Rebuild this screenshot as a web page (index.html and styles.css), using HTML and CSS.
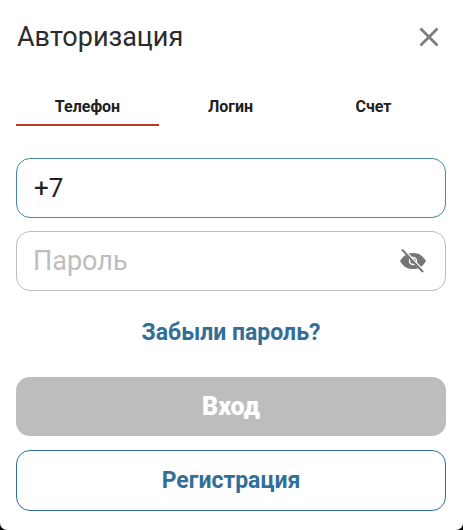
FILE: index.html
```html
<!DOCTYPE html>
<html lang="ru">
<head>
    <meta charset="UTF-8">
    <title>Авторизация</title>
    <link rel="stylesheet" href="styles.css">
</head>
<body>
    <div class="modal">
        <div class="modal-head">
            <div class="modal-title">Авторизация</div>
            <svg class="close" width="20" height="20" viewBox="0 0 20 20">
                <path d="M1.5 1.5 L18.5 18.5 M18.5 1.5 L1.5 18.5" stroke="#7d7d7d" stroke-width="2.8" fill="none"/>
            </svg>
        </div>
        <div class="tabs">
            <div class="tab active">Телефон</div>
            <div class="tab">Логин</div>
            <div class="tab">Счет</div>
        </div>
        <div class="field focused">
            <span class="value">+7</span>
        </div>
        <div class="field">
            <span class="placeholder">Пароль</span>
            <svg class="eye" width="28" height="24" viewBox="0 0 28 24">
                <path d="M1 12 C5 5.5 9 4 14 4 C19 4 23 5.5 27 12 C23 18.5 19 20 14 20 C9 20 5 18.5 1 12 Z" fill="#757575"/>
                <circle cx="14" cy="12" r="4.2" fill="#fff"/>
                <circle cx="14" cy="12" r="2.8" fill="#757575"/>
                <path d="M4 0.5 L25 23" stroke="#fff" stroke-width="3"/>
                <path d="M3 0.5 L24 23" stroke="#757575" stroke-width="2"/>
            </svg>
        </div>
        <a class="forgot">Забыли пароль?</a>
        <div class="btn btn-login">Вход</div>
        <div class="btn btn-register">Регистрация</div>
    </div>
</body>
</html>
```

FILE: styles.css
```css
html, body {
    height: 100%;
}
body {
    background-color: black;
    margin: 0;
    font-family: Roboto, "Liberation Sans", sans-serif;
}
.modal {
    background-color: #fff;
    height: 530px;
    box-sizing: border-box;
    padding: 0 17px 0 16px;
    border-radius: 0 0 7px 7px;
    display: flex;
    flex-direction: column;
}
.modal-head {
    display: flex;
    justify-content: space-between;
    align-items: center;
    height: 37px;
    margin-top: 18px;
    padding-left: 1px;
    padding-right: 7px;
}
.modal-title {
    font-size: 27px;
    color: #2b2b2b;
}
.tabs {
    display: flex;
    margin-top: 29px;
}
.tab {
    width: 143px;
    height: 42px;
    box-sizing: border-box;
    padding-top: 13px;
    text-align: center;
    font-size: 16px;
    font-weight: 700;
    color: #212121;
}
.tab.active {
    border-bottom: 2px solid #b93a2f;
}
.field {
    height: 60px;
    box-sizing: border-box;
    border: 1px solid #bdbdbd;
    border-radius: 14px;
    margin-bottom: 13px;
    padding: 0 17px;
    display: flex;
    align-items: center;
    justify-content: space-between;
    font-size: 26px;
}
.field.focused {
    border-color: #4388a3;
    margin-top: 32px;
}
.value {
    color: #212121;
}
.placeholder {
    color: #bdbdbd;
    font-size: 27px;
    margin-left: -1px;
}
.eye {
    margin-right: 1px;
}
.forgot {
    text-align: center;
    margin-top: 15px;
    font-size: 23px;
    font-weight: 700;
    color: #336e99;
}
.btn {
    display: flex;
    align-items: center;
    justify-content: center;
    box-sizing: border-box;
    border-radius: 14px;
    font-size: 23px;
    font-weight: 700;
}
.btn-login {
    background-color: #bdbdbd;
    color: #fff;
    height: 59px;
    margin-top: 31px;
    font-weight: 900;
    font-size: 25px;
}
.btn-register {
    background-color: #fff;
    border: 1px solid #336e99;
    color: #336e99;
    height: 61px;
    margin-top: 14px;
}
```
